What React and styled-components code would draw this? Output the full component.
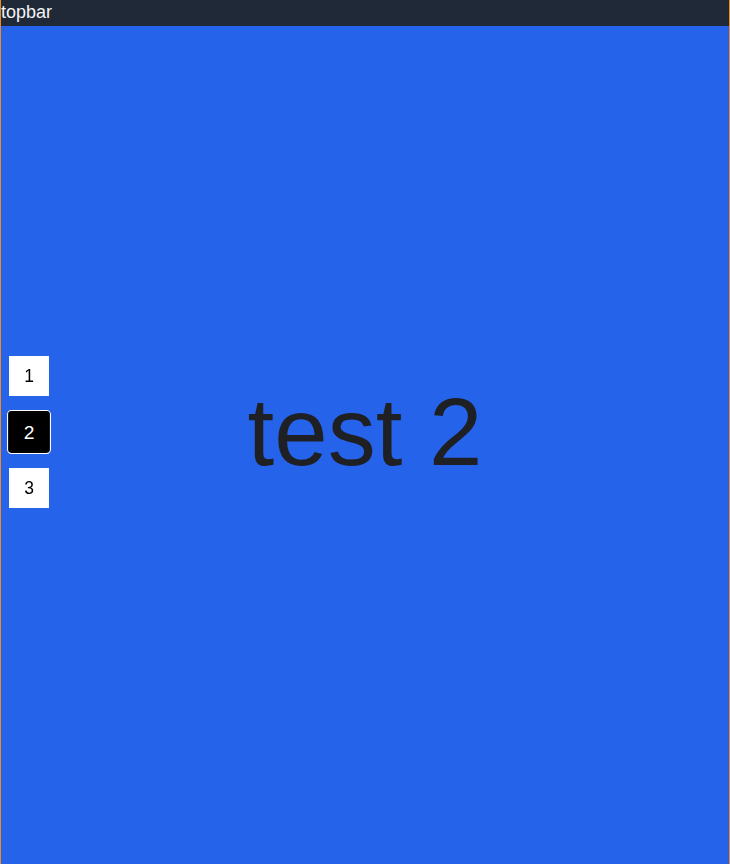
import React, { useState } from "react";
import styled, { createGlobalStyle } from "styled-components";

const GlobalStyle = createGlobalStyle`
  html, body {
    margin: 0;
    padding: 0;
    font-family: "Liberation Sans", Arial, sans-serif;
    background: #2563eb;
  }
`;

const Frame = styled.div`
  min-height: 100vh;
  border-left: 1px solid #f08a24;
  border-right: 1px solid #f08a24;
  background: #2563eb;
`;

const TopBar = styled.div`
  position: fixed;
  top: 0;
  left: 1px;
  right: 1px;
  height: 26px;
  line-height: 24px;
  background: #1f2937;
  color: #f3f4f6;
  font-size: 18px;
  z-index: 2;
`;

const Slide = styled.section`
  height: 100vh;
  display: flex;
  align-items: center;
  justify-content: center;
  color: #1f2024;
  font-size: 96px;
`;

const Nav = styled.nav`
  position: fixed;
  left: 9px;
  top: 50%;
  transform: translateY(-50%);
  display: flex;
  flex-direction: column;
  gap: 16px;
  z-index: 1;
`;

const NavButton = styled.button`
  width: 40px;
  height: 40px;
  padding: 0;
  border: 1px solid #ffffff;
  border-radius: ${(p) => (p.$active ? "4px" : "0")};
  background: ${(p) => (p.$active ? "#000000" : "#ffffff")};
  color: ${(p) => (p.$active ? "#ffffff" : "#000000")};
  font-family: "Liberation Sans", Arial, sans-serif;
  font-size: 17.5px;
  cursor: pointer;
  transform: ${(p) => (p.$active ? "scale(1.1)" : "none")};
`;

const slides = ["test 1", "test 2", "test 3"];

const App = () => {
  const [current, setCurrent] = useState(1);

  return (
    <>
      <GlobalStyle />
      <Frame>
        <TopBar>topbar</TopBar>
        <Nav>
          {slides.map((s, i) => (
            <NavButton key={s} $active={i === current} onClick={() => setCurrent(i)}>
              {i + 1}
            </NavButton>
          ))}
        </Nav>
        <Slide>{slides[current]}</Slide>
      </Frame>
    </>
  );
};

export default App;
